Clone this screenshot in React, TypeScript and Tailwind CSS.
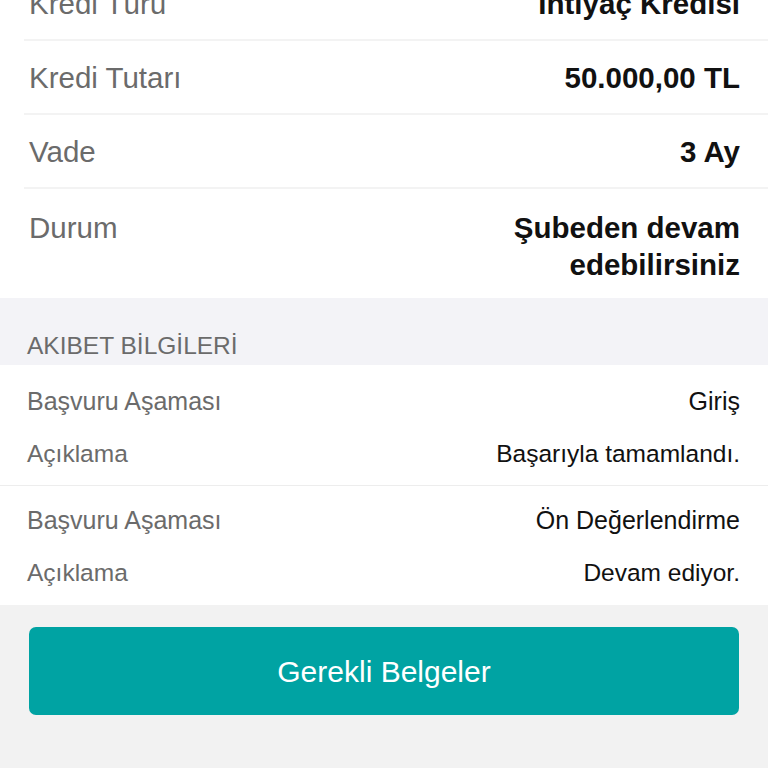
import React from "react";

const summary = [
  { label: "Kredi Türü", value: "İhtiyaç Kredisi" },
  { label: "Kredi Tutarı", value: "50.000,00 TL" },
  { label: "Vade", value: "3 Ay" },
];

const stages = [
  { stage: "Giriş", note: "Başarıyla tamamlandı." },
  { stage: "Ön Değerlendirme", note: "Devam ediyor." },
];

export default function App() {
  return (
    <div className="w-[768px] h-[768px] overflow-hidden bg-[#f2f2f2] font-['Liberation_Sans',Arial,sans-serif]">
      {/* Kredi özeti */}
      <div className="bg-white -mt-[33px]">
        {summary.map((row) => (
          <div key={row.label} className="ml-[24px] border-b-2 border-[#f3f3f3]">
            <div className="flex items-center justify-between h-[72px] pl-[5px] pr-[28px] text-[29.5px] leading-[37px]">
              <span className="text-[#6b6b6b]">{row.label}</span>
              <span className="font-bold text-[#111]">{row.value}</span>
            </div>
          </div>
        ))}
        <div className="flex justify-between pl-[29px] pr-[28px] pt-[20px] pb-[15px] text-[29.5px] leading-[37px]">
          <span className="text-[#6b6b6b]">Durum</span>
          <span className="font-bold text-[#111] text-right">
            Şubeden devam
            <br />
            edebilirsiniz
          </span>
        </div>
      </div>

      {/* Akibet başlığı */}
      <div className="bg-[#f3f3f7] h-[67px] flex items-end pl-[27px] pb-[5px]">
        <span className="text-[24.5px] leading-[28px] text-[#6b6b6b]">AKIBET BİLGİLERİ</span>
      </div>

      {/* Akibet satırları */}
      <div className="bg-white">
        {stages.map((s, i) => (
          <div
            key={s.stage}
            className={
              i === 0
                ? "pt-[11px] pb-[5px] border-b border-[#ededed]"
                : "pt-[9px] pb-[6px]"
            }
          >
            <div className="flex items-center justify-between h-[52px] pl-[27px] pr-[28px] text-[25px]">
              <span className="text-[#6b6b6b]">Başvuru Aşaması</span>
              <span className="text-[#111]">{s.stage}</span>
            </div>
            <div className="flex items-center justify-between h-[52px] pl-[27px] pr-[28px] text-[24.5px]">
              <span className="text-[#6b6b6b]">Açıklama</span>
              <span className="text-[#111]">{s.note}</span>
            </div>
          </div>
        ))}
      </div>

      <div className="pt-[22px] px-[29px]">
        <button className="w-full h-[88px] rounded-[7px] bg-[#00a3a3] text-white text-[30px] flex items-center justify-center">
          Gerekli Belgeler
        </button>
      </div>
    </div>
  );
}
